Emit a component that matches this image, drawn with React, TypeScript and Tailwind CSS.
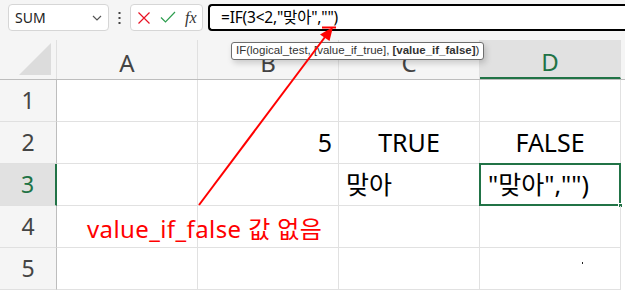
import React from "react";

const FONT = "font-['Noto_Sans','Noto_Sans_CJK_KR',sans-serif]";

const COLUMNS = ["A", "B", "C", "D"];

type Cell = { text?: string; align?: "left" | "center" | "right" };

// Grid content; rows 1..5, columns A..D.
const ROWS: Cell[][] = [
  [{}, {}, {}, {}],
  [{}, { text: "5", align: "right" }, { text: "TRUE", align: "center" }, { text: "FALSE", align: "center" }],
  [{}, {}, { text: "맞아", align: "left" }, { text: "\"맞아\",\"\")", align: "left" }],
  [{}, {}, {}, {}],
  [{}, {}, {}, {}],
];

const alignClass = {
  left: "justify-start pl-[7px]",
  center: "justify-center",
  right: "justify-end pr-[6px]",
};

function Toolbar() {
  return (
    <div className="flex h-[40px] items-start gap-[5px] pl-[8px] pt-[4px]">
      {/* Name box */}
      <div className="flex h-[27px] w-[101px] shrink-0 items-center justify-between rounded-[4px] border border-[#d6d6d6] bg-white pl-[6px] pr-[6px]">
        <span className="text-[14px] text-[#222]">SUM</span>
        <svg width="10" height="6" viewBox="0 0 10 6" fill="none">
          <path d="M1 1l4 4 4-4" stroke="#555" strokeWidth="1.2" />
        </svg>
      </div>
      <div className="flex h-[27px] w-[11px] shrink-0 items-center justify-center">
        <svg width="3" height="12" viewBox="0 0 3 12">
          <rect x="0.5" y="0" width="2" height="2" fill="#444" />
          <rect x="0.5" y="5" width="2" height="2" fill="#444" />
          <rect x="0.5" y="10" width="2" height="2" fill="#444" />
        </svg>
      </div>
      {/* Cancel / enter / function */}
      <div className="flex h-[27px] w-[73px] shrink-0 items-center gap-[9px] rounded-[4px] border border-[#d6d6d6] bg-white pl-[6px]">
        <svg width="14" height="14" viewBox="0 0 14 14" fill="none">
          <path d="M1.5 1.5l11 11M12.5 1.5l-11 11" stroke="#e81123" strokeWidth="1.2" />
        </svg>
        <svg width="16" height="13" viewBox="0 0 16 13" fill="none">
          <path d="M1 6.5l4.5 4.5L15 1" stroke="#2e9e4f" strokeWidth="1.2" />
        </svg>
        <span className="font-['Liberation_Serif',serif] text-[16px] italic leading-none text-[#333]">fx</span>
      </div>
      {/* Formula bar */}
      <div className="flex h-[27px] flex-1 items-center rounded-l-[4px] border-2 border-r-0 border-black bg-white pl-[11px]">
        <span className="text-[15.5px] leading-none tracking-[-0.2px] text-black">=IF(3&lt;2,"맞아",""</span>
        <span className="text-[15.5px] leading-none text-black">)</span>
      </div>
    </div>
  );
}

function HeaderRow() {
  return (
    <div className="flex h-[40px] border-b border-[#bdbdbd]">
      <div className="flex w-[57px] shrink-0 items-end justify-end border-r border-[#e0e0e0] pb-[3px] pr-[4px]">
        <svg width="34" height="34" viewBox="0 0 34 34">
          <path d="M33 1V33H1Z" fill="#dcdcdc" />
        </svg>
      </div>
      {COLUMNS.map((c) => {
        const selected = c === "D";
        return (
          <div
            key={c}
            className={`flex w-[141px] shrink-0 items-center justify-center border-r border-[#e0e0e0] pt-[6px] text-[24px] ${
              selected
                ? "border-b-2 border-b-[#217346] bg-[#e1e1e1] text-[#217346]"
                : "text-[#444]"
            }`}
          >
            {c}
          </div>
        );
      })}
    </div>
  );
}

function GridRow({ index, cells }: { index: number; cells: Cell[] }) {
  const rowSelected = index === 3;
  return (
    <div className="flex h-[42px]">
      <div
        className={`flex w-[57px] shrink-0 items-center justify-center border-b border-[#e0e0e0] text-[23px] ${
          rowSelected
            ? "border-r-2 border-r-[#217346] bg-[#e1e1e1] text-[#217346]"
            : "border-r border-r-[#bdbdbd] bg-[#f5f5f5] text-[#444]"
        }`}
      >
        {index}
      </div>
      {cells.map((cell, i) => {
        const active = rowSelected && i === 3;
        return (
          <div
            key={i}
            className={`relative flex w-[141px] shrink-0 items-center text-[25px] text-black ${
              alignClass[cell.align ?? "left"]
            } ${
              active
                ? "-ml-px -mt-px h-[43px] w-[142px] border-2 border-[#217346] pl-[5px]"
                : "border-b border-r border-[#e1e1e1]"
            }`}
          >
            {cell.text}
            {active && (
              <span className="absolute -bottom-[4px] -right-[4px] h-[5px] w-[5px] border border-white bg-[#217346]" />
            )}
          </div>
        );
      })}
    </div>
  );
}

export default function App() {
  return (
    <div className={`relative h-[290px] w-[625px] overflow-hidden bg-[#f5f5f5] ${FONT}`}>
      <Toolbar />
      <HeaderRow />
      <div className="bg-white">
        {ROWS.map((cells, r) => (
          <GridRow key={r} index={r + 1} cells={cells} />
        ))}
      </div>

      {/* Function argument tooltip */}
      <div className="absolute left-[231px] top-[42px] flex h-[18px] items-center whitespace-nowrap rounded-[3px] border border-[#6e6e6e] bg-white px-[4px] font-['Liberation_Sans',sans-serif] text-[11.5px] leading-none text-[#333] shadow-[2px_3px_6px_rgba(0,0,0,0.18)]">
        IF(logical_test, [value_if_true], <b className="ml-[3px]">[value_if_false]</b>)
      </div>

      {/* Annotation */}
      <span className="absolute left-[87px] top-[211px] whitespace-nowrap text-[24px] tracking-[0.4px] text-[#ff0000]">
        value_if_false 값 없음
      </span>
      <svg className="pointer-events-none absolute inset-0" width="625" height="290" viewBox="0 0 625 290">
        <line x1="199" y1="205" x2="328" y2="33" stroke="#ff0000" strokeWidth="2" />
        <path d="M333 27L329.5 41L320 34.5Z" fill="#ff0000" />
        <line x1="322" y1="27.5" x2="336" y2="27.5" stroke="#ff0000" strokeWidth="2" />
        <rect x="582" y="262" width="1" height="2" fill="#222" />
      </svg>
    </div>
  );
}
